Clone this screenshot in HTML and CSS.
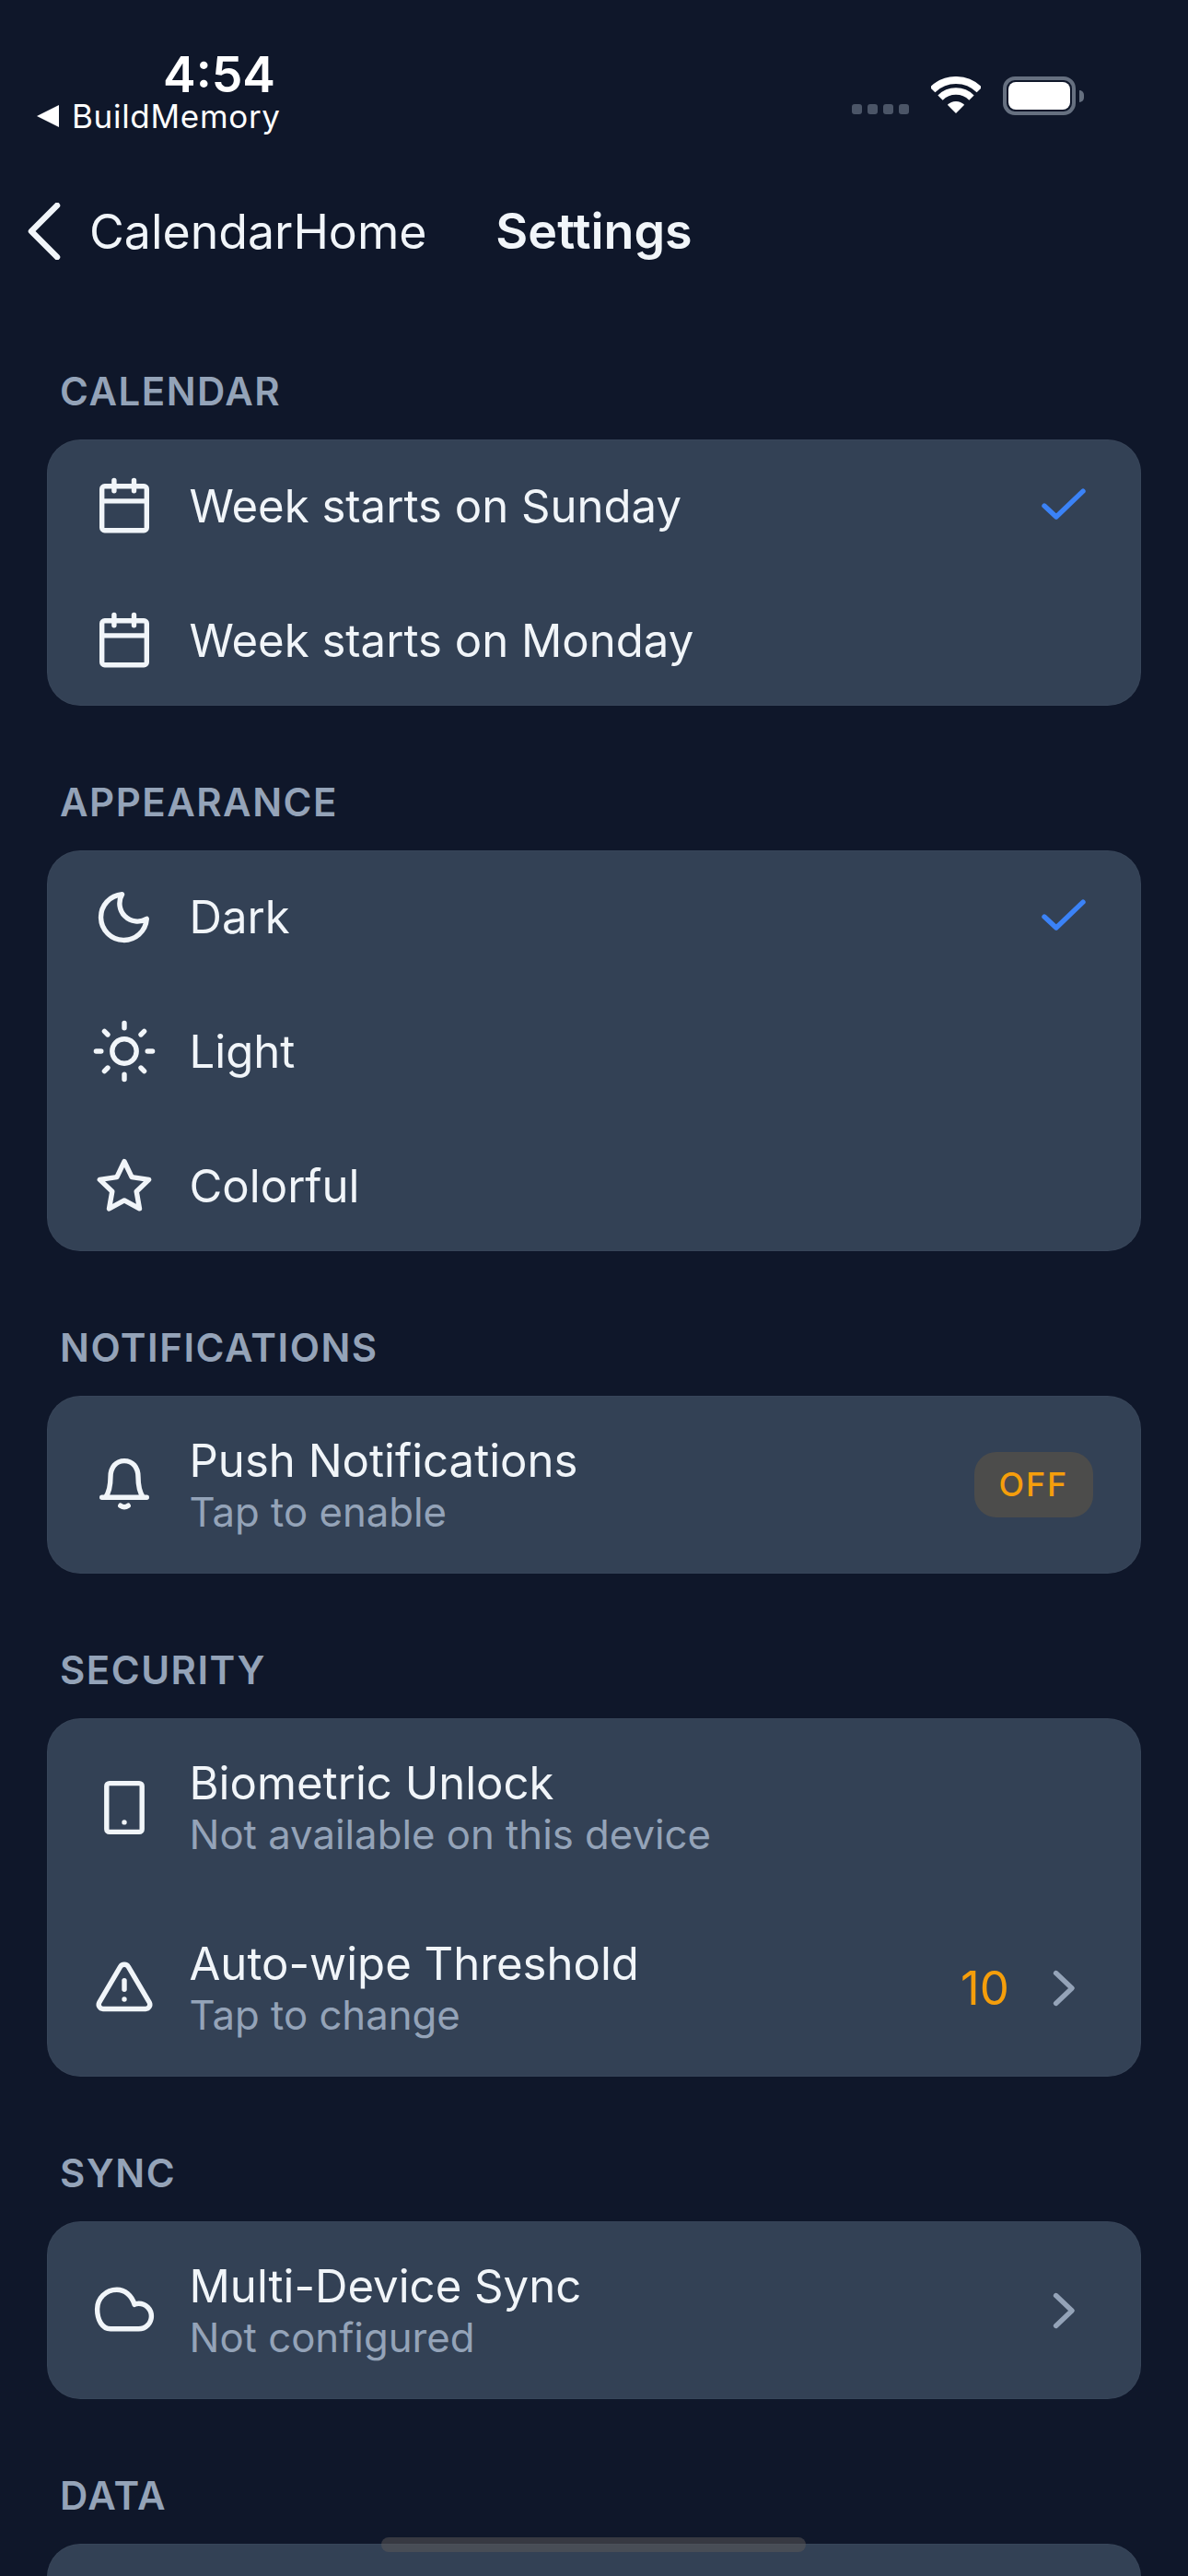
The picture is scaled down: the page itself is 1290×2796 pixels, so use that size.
FILE: index.html
```html
<!DOCTYPE html>
<html lang="en">
<head>
<meta charset="utf-8">
<title>Settings</title>
<link rel="stylesheet" href="styles.css">
</head>
<body>
<div class="phone">
  <header class="status">
    <div class="status-left">
      <div class="time">4:54</div>
      <div class="crumb"><span class="crumb-tri"></span><span>BuildMemory</span></div>
    </div>
    <div class="status-right">
      <div class="dots"><i></i><i></i><i></i><i></i></div>
      <svg class="wifi" viewBox="0 0 54 42" fill="none" stroke="#fff"><path d="M1.54 14.54A36 36 0 0 1 52.46 14.54" stroke-width="8"/><path d="M10.03 23.03A24 24 0 0 1 43.97 23.03" stroke-width="7.5"/><path d="M27 40 17.8 30.8A13 13 0 0 1 36.2 30.8Z" fill="#fff" stroke="none"/></svg>
      <div class="battery"><div class="battery-body"><div class="battery-fill"></div></div><div class="battery-cap"></div></div>
    </div>
  </header>

  <nav class="nav">
    <div class="nav-back">
      <svg class="back-icon" viewBox="0 0 36 62" fill="none" stroke="#f1f5f9" stroke-width="6.5" stroke-linecap="round" stroke-linejoin="round"><path d="M32 3 4 31 32 59"/></svg>
      <span class="back-text">CalendarHome</span>
    </div>
    <div class="nav-title">Settings</div>
  </nav>

  <main class="content">
    <section class="section">
      <h2 class="label">CALENDAR</h2>
      <div class="card">
        <div class="row">
          <svg class="icon" viewBox="0 0 24 24"><rect x="3.9" y="4.9" width="16.2" height="16" rx="1"/><path d="M3.9 10.3H20.1M8.3 2.8V6.6M15.5 2.8V6.6"/></svg>
          <div class="text"><div class="title">Week starts on Sunday</div></div>
          <svg class="icon trail" viewBox="0 0 24 24"><path class="check" d="M5 12 9.3 16 19 6.7"/></svg>
        </div>
        <div class="row">
          <svg class="icon" viewBox="0 0 24 24"><rect x="3.9" y="4.9" width="16.2" height="16" rx="1"/><path d="M3.9 10.3H20.1M8.3 2.8V6.6M15.5 2.8V6.6"/></svg>
          <div class="text"><div class="title">Week starts on Monday</div></div>
        </div>
      </div>
    </section>

    <section class="section">
      <h2 class="label">APPEARANCE</h2>
      <div class="card">
        <div class="row">
          <svg class="icon" viewBox="0 0 24 24"><path d="M20.1 12.8A8.3 8.3 0 1 1 11.2 3.9 6.5 6.5 0 0 0 20.1 12.8Z"/></svg>
          <div class="text"><div class="title">Dark</div></div>
          <svg class="icon trail" viewBox="0 0 24 24"><path class="check" d="M5 12 9.3 16 19 6.7"/></svg>
        </div>
        <div class="row">
          <svg class="icon" viewBox="0 0 24 24"><circle cx="12" cy="12" r="4.4"/><path d="M12 1.8V3.6M12 20.4V22.2M4.8 4.8 6 6M18 18 19.2 19.2M1.8 12H3.6M20.4 12H22.2M4.8 19.2 6 18M18 6 19.2 4.8"/></svg>
          <div class="text"><div class="title">Light</div></div>
        </div>
        <div class="row">
          <svg class="icon" viewBox="0 0 24 24"><path d="M12 3.2 14.7 8.9 20.9 9.8 16.4 14.1 17.5 20.3 12 17.3 6.5 20.3 7.6 14.1 3.1 9.8 9.3 8.9Z"/></svg>
          <div class="text"><div class="title">Colorful</div></div>
        </div>
      </div>
    </section>

    <section class="section">
      <h2 class="label">NOTIFICATIONS</h2>
      <div class="card">
        <div class="row tall">
          <svg class="icon" viewBox="0 0 24 24"><path d="M3.9 16.4H20.1M5.2 16.4C6.5 14.5 7 12.5 7 9 7 5.5 9 3.2 12 3.2S17 5.5 17 9C17 12.5 17.5 14.5 18.8 16.4M10.6 19.4Q12 20.4 13.4 19.4"/></svg>
          <div class="text"><div class="title">Push Notifications</div><div class="sub">Tap to enable</div></div>
          <span class="badge">OFF</span>
        </div>
      </div>
    </section>

    <section class="section">
      <h2 class="label">SECURITY</h2>
      <div class="card">
        <div class="row tall">
          <svg class="icon" viewBox="0 0 24 24"><rect x="5.6" y="3.2" width="12.8" height="17.6" rx="1"/><circle class="dot" cx="12" cy="17.3" r="0.9"/></svg>
          <div class="text"><div class="title">Biometric Unlock</div><div class="sub">Not available on this device</div></div>
        </div>
        <div class="row tall">
          <svg class="icon" viewBox="0 0 24 24"><path d="M10.5 4.3 2.9 17.2A1.6 1.6 0 0 0 4.3 19.5H19.7A1.6 1.6 0 0 0 21.1 17.2L13.5 4.3A1.7 1.7 0 0 0 10.5 4.3Z"/><path d="M12 9.2V12.4"/><circle class="dot" cx="12" cy="16" r="0.9"/></svg>
          <div class="text"><div class="title">Auto-wipe Threshold</div><div class="sub">Tap to change</div></div>
          <span class="value">10</span>
          <svg class="icon chev" viewBox="0 0 24 24"><path d="M9.2 6.5 15 12 9.2 17.5"/></svg>
        </div>
      </div>
    </section>

    <section class="section">
      <h2 class="label">SYNC</h2>
      <div class="card">
        <div class="row tall">
          <svg class="icon" viewBox="0 0 24 24"><path d="M7 18.6H17.2A4.6 4.6 0 0 0 21.8 14 4.6 4.6 0 0 0 17.2 9.4C16.6 9.4 16.1 9.5 15.7 9.8 14.7 6.5 12.2 4.4 9.3 4.4 5.3 4.4 2.2 7.6 2.2 11.4 2.2 15.4 4 18.6 7 18.6Z"/></svg>
          <div class="text"><div class="title">Multi-Device Sync</div><div class="sub">Not configured</div></div>
          <svg class="icon chev" viewBox="0 0 24 24"><path d="M9.2 6.5 15 12 9.2 17.5"/></svg>
        </div>
      </div>
    </section>

    <section class="section">
      <h2 class="label">DATA</h2>
      <div class="card card-open"></div>
    </section>
  </main>

  <div class="home-bar"></div>
</div>
</body>
</html>
```

FILE: styles.css
```css
* { box-sizing: border-box; }
html, body { margin: 0; padding: 0; }
body { background: #0f172a; font-family: Inter, "Noto Sans", sans-serif; color: #f1f5f9; }
.phone { position: relative; width: 1290px; height: 2796px; overflow: hidden; background: #0f172a; }

.status { display: flex; justify-content: space-between; align-items: flex-start; height: 190px; padding: 53.5px 113px 0 40px; }
.status-left { display: flex; flex-direction: column; }
.time { margin-left: 137px; font-size: 53.5px; line-height: 53px; font-weight: 600; color: #fff; }
.crumb { display: flex; align-items: center; gap: 14px; font-size: 35px; line-height: 39px; color: #fff; letter-spacing: 0.7px; font-weight: 400; }
.crumb-tri { width: 0; height: 0; border-style: solid; border-width: 12px 24px 12px 0; border-color: transparent #fff transparent transparent; }
.status-right { display: flex; align-items: flex-start; padding-top: 29.5px; }
.dots { display: flex; gap: 6px; margin: 30px 24px 0 0; }
.dots i { display: block; width: 11px; height: 11px; border-radius: 3px; background: #4b5567; }
.wifi { display: block; width: 54px; height: 42px; margin-right: 24px; }
.battery { display: flex; align-items: center; }
.battery-body { width: 79px; height: 42px; padding: 2px; border: 4px solid #667080; border-radius: 13px; }
.battery-fill { width: 100%; height: 100%; background: #fff; border-radius: 8px; }
.battery-cap { width: 5px; height: 13px; margin-left: 4px; background: #667080; border-radius: 0 6px 6px 0; }

.nav { display: grid; grid-template-columns: 1fr auto 1fr; align-items: center; height: 120px; padding-top: 1px; }
.nav-back { display: flex; align-items: center; gap: 31px; padding-left: 30px; }
.back-icon { display: block; width: 36px; height: 62px; }
.back-text { font-size: 51.8px; line-height: 64px; color: #f1f5f9; }
.nav-title { font-size: 53.8px; line-height: 64px; font-weight: 600; color: #f1f5f9; }

.content { display: flex; flex-direction: column; gap: 80px; padding: 90px 51px 0; }
.label { margin: 0 0 27px 14px; font-size: 42px; line-height: 50px; font-weight: 600; color: #94a3b8; letter-spacing: 1.5px; }
.card { display: flex; flex-direction: column; gap: 3px; background: #334155; border-radius: 36px; box-shadow: inset 0 0 0 1px rgba(255, 255, 255, 0.025); }
.card-open { height: 300px; }
.row { display: flex; align-items: center; height: 143px; padding: 0 48px; }
.row.tall { height: 193px; }

.icon { display: block; flex: none; width: 72px; height: 72px; fill: none; stroke: #f1f5f9; stroke-width: 1.8; stroke-linecap: round; stroke-linejoin: round; }
.icon .dot { fill: #f1f5f9; stroke: none; }
.icon .check { stroke: #3b82f6; }
.icon.chev { stroke: #94a3b8; }
.text { flex: 1; min-width: 0; margin-left: 34.5px; }
.title { font-size: 49.1px; line-height: 60px; color: #f1f5f9; }
.sub { font-size: 43.7px; line-height: 54px; color: #94a3b8; }
.badge { margin-right: 4px; padding: 0 27px; font-size: 36px; line-height: 71px; font-weight: 500; letter-spacing: 1.8px; color: #f59e0b; background: rgba(245, 158, 11, 0.13); border-radius: 24px; }
.value { margin-right: 23px; font-size: 51px; color: #f59e0b; }

.home-bar { position: absolute; left: 414px; top: 2754px; width: 461px; height: 16px; border-radius: 8px; background: rgba(92, 88, 88, 0.52); }
```
